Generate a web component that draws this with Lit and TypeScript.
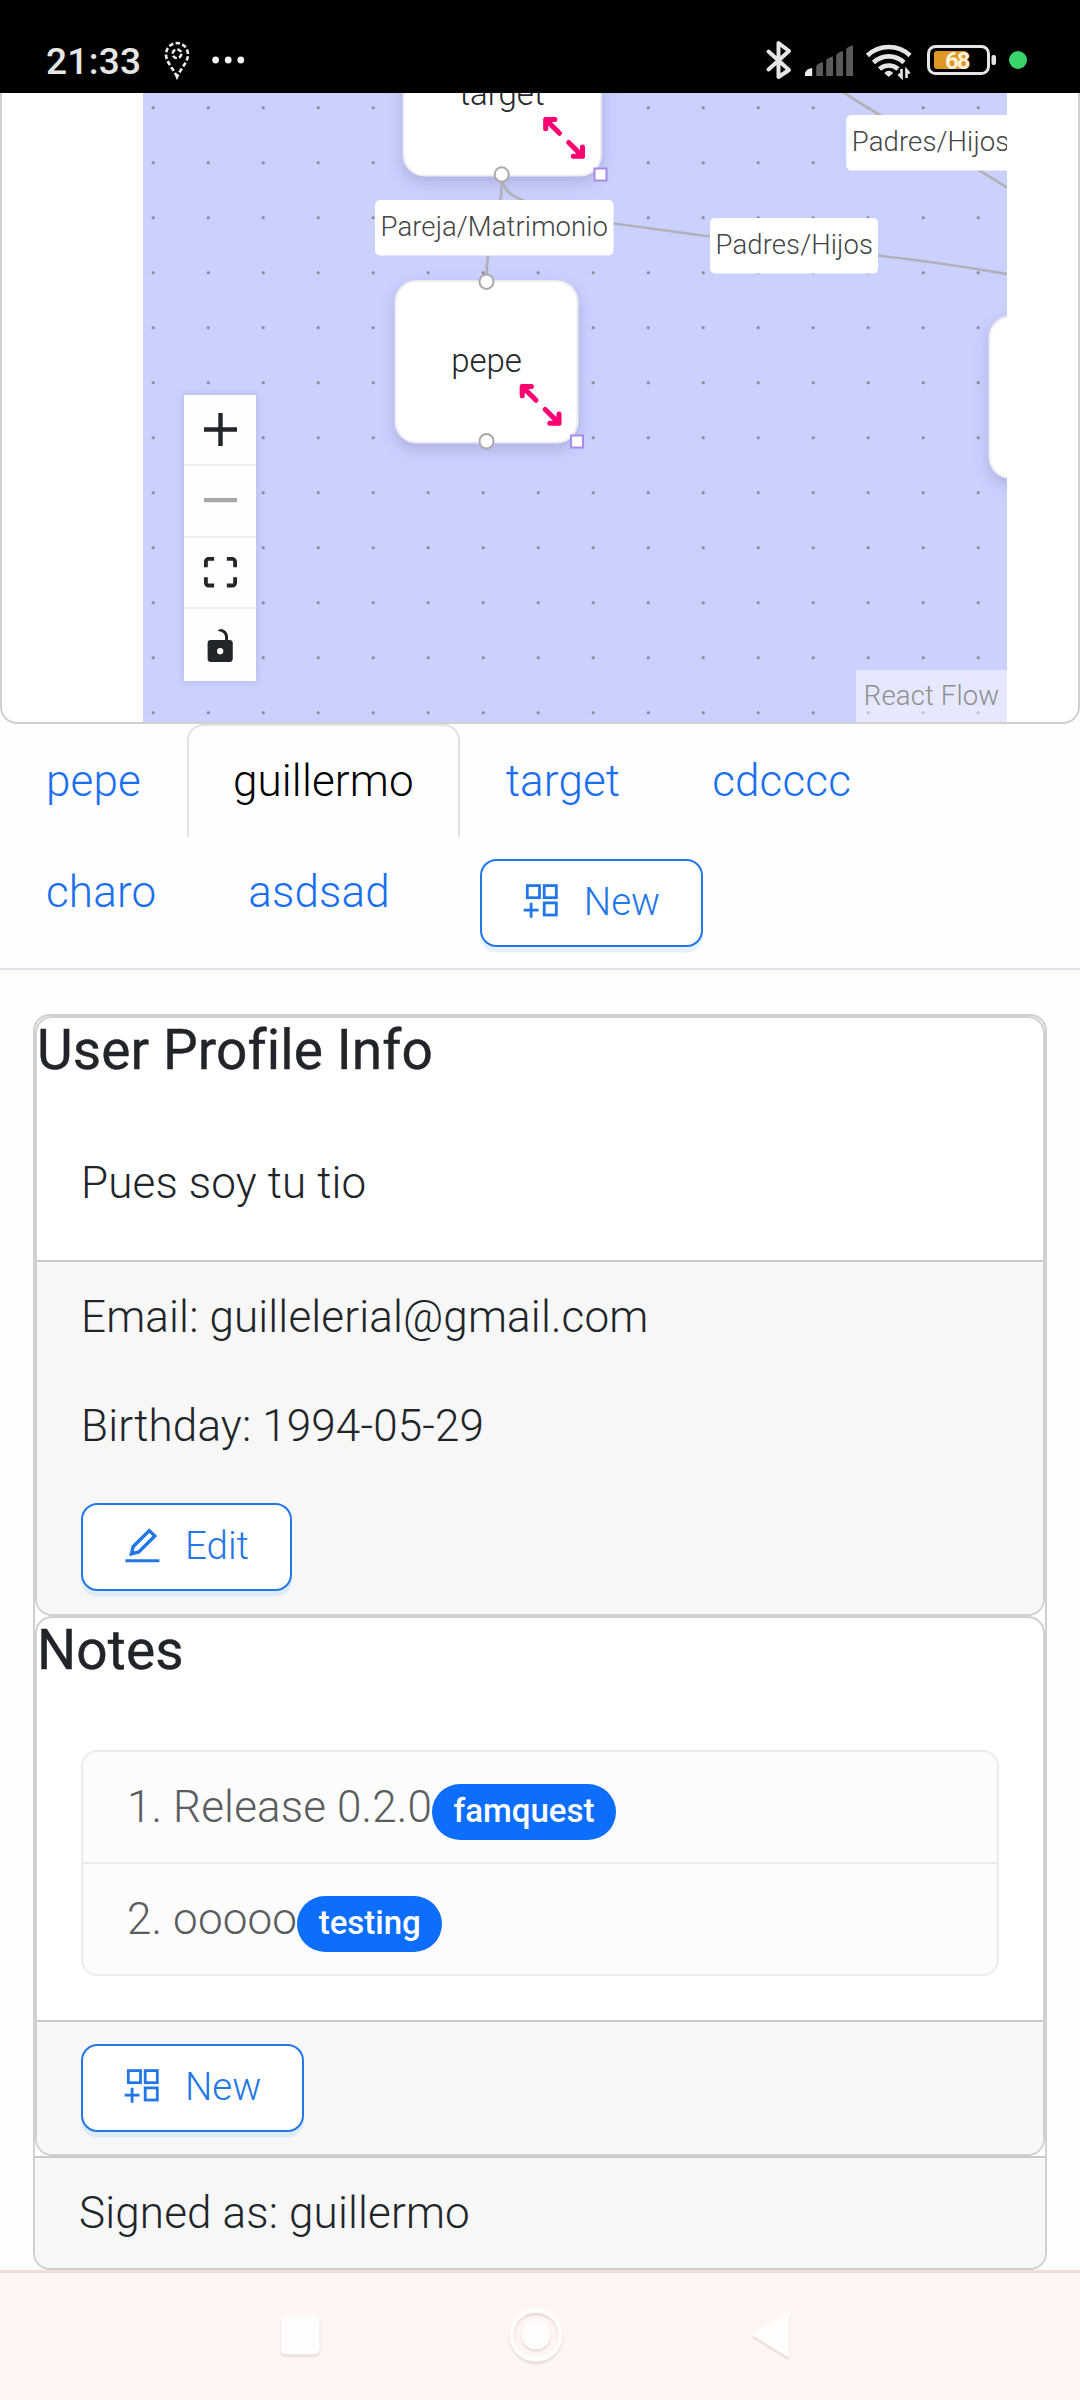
import { LitElement, html, css, svg, nothing } from "lit";
import { customElement, property } from "lit/decorators.js";

const appIcon = html`<svg class="ico" viewBox="0 0 36 36" fill="none" stroke="currentColor" stroke-width="2.8">
  <rect x="4.3" y="2.6" width="12.200" height="12.100"></rect>
  <rect x="21.2" y="2.6" width="12.100" height="12.100"></rect>
  <rect x="21.2" y="19.9" width="12.100" height="12.100"></rect>
  <path d="M0.6 27.2H15.6M8.1 19.7V34.7"></path>
</svg>`;

const editIcon = html`<svg class="ico" viewBox="0 0 36 36" fill="none" stroke="currentColor">
  <path d="M1.4 33.7H35.4" stroke-width="3"></path>
  <path d="M25.3 3.6L30.800 8.900L14.800 24.900L7.500 26.800L9.100 19.700Z" stroke-width="3.4"></path>
</svg>`;

@customElement("ui-button")
class UiButton extends LitElement {
  @property() label = "";
  @property() icon = "new";
  static styles = css`
    :host { display: inline-block; }
    .btn {
      display: flex; align-items: center; gap: 25px; height: 88px; box-sizing: border-box;
      padding: 0 41px; border: 2px solid #2277e8; border-radius: 16.5px; background: #fff;
      color: #2277e8; font: 300 38.5px/60px Roboto, sans-serif; letter-spacing: 0; box-shadow: 0 5.5px 0 rgba(5, 145, 255, 0.1);
    }
    .ico { width: 36px; height: 36px; display: block; margin-top: -4px; }
    .label { margin-top: -2px; }
  `;
  render() {
    return html`<div class="btn">${this.icon === "edit" ? editIcon : appIcon}<span class="label">${this.label}</span></div>`;
  }
}

@customElement("status-bar")
class StatusBar extends LitElement {
  static styles = css`
    :host { display: block; }
    .bar { height: 93px; background: #000; display: flex; box-sizing: border-box; padding: 0 52px 0 46px; color: #e6e6e6; align-items: flex-start; }
    .time { font: 500 37px/44px Roboto, sans-serif; letter-spacing: 0.3px; margin-top: 40px; width: 116px; white-space: nowrap; }
    .left, .right { display: block; }
    .right { margin-left: auto; }
    .pct { font: 700 24px Roboto, sans-serif; letter-spacing: 0; }
  `;
  render() {
    return html`<div class="bar">
      <span class="time">21:33</span>
      <svg class="left" width="90" height="93" viewBox="162 0 90 93" fill="none" stroke="#f0f0f0">
        <path d="M177 77C173 68 166 62 166 54.500A11 11.500 0 0 1 188 54.500C188 62 181 68 177 77Z" stroke-width="2.600" stroke-dasharray="4.500 2.400"></path>
        <circle cx="177" cy="53.800" r="4.300" stroke-width="2.400" stroke-dasharray="4.500 2.200"></circle>
        <g fill="#f0f0f0" stroke="none"><circle cx="215.600" cy="60" r="3.400"></circle><circle cx="228.200" cy="60" r="3.400"></circle><circle cx="240.800" cy="60" r="3.400"></circle></g>
      </svg>
      <svg class="right" width="268" height="93" viewBox="760 0 268 93" fill="none" stroke="#e6e6e6">
        <path d="M768.500 51.500L789 70L778.500 77V43L789 51L768.500 69.500" stroke-width="4" stroke-linejoin="round" stroke-linecap="round"></path>
        <g stroke="none" fill="#5a5a5a">
          <path d="M805 76V73Q806 69 812.200 68V76Z" fill="#eee"></path>
          <path d="M816.200 76V66Q818 63 823 62V76Z"></path>
          <path d="M826.200 76V60Q828 57.500 833 56.500V76Z"></path>
          <path d="M836.200 76V55Q838 52 843 51V76Z"></path>
          <path d="M846.200 76V49Q848 46.500 853 45.500V76Z"></path>
        </g>
        <g stroke-width="4.600">
          <path d="M867.500 55.500A31 31 0 0 1 910 55.500"></path>
          <path d="M873.500 62.500A22 22 0 0 1 904 62.500"></path>
          <path d="M879.500 69A14 14 0 0 1 898 69"></path>
        </g>
        <path d="M884.300 73Q888.700 68.500 893.200 73L888.700 77Z" fill="#e6e6e6" stroke="none"></path>
        <path d="M901.500 69V77L898.500 74M906.500 78V70L909.500 73.500" stroke-width="2.600"></path>
        <rect x="928.500" y="46.500" width="60" height="27" rx="7" stroke-width="3"></rect>
        <rect x="991.500" y="55" width="4.500" height="10" rx="2" fill="#e6e6e6" stroke="none"></rect>
        <rect x="934" y="51" width="33" height="18" rx="3" fill="#dd9722" stroke="none"></rect>
        <text class="pct" x="945" y="69.300" textLength="25.500" fill="#fff1d8" stroke="none">68</text>
        <circle cx="1018" cy="60" r="9" fill="#39d46a" stroke="none"></circle>
      </svg>
    </div>`;
  }
}

interface FlowNode { x: number; y: number; w: number; h: number; label: string; tx: number; ty: number; bottom: boolean; }
interface EdgeLabel { x: number; y: number; w: number; text: string; tx: number; tw: number; }

/* Canvas origin is (143, 93) in the window; the view box keeps window units. */
const nodes: FlowNode[] = [
  { x: 402.5, y: 13, w: 199.500, h: 163.500, label: "target", tx: 502, ty: 104.500, bottom: true },
  { x: 394.500, y: 280, w: 184, h: 163.500, label: "pepe", tx: 486.500, ty: 372, bottom: true },
  { x: 988.500, y: 315.500, w: 184, h: 163.500, label: "", tx: 0, ty: 0, bottom: false },
];
const labels: EdgeLabel[] = [
  { x: 375, y: 200, w: 238.500, text: "Pareja/Matrimonio", tx: 380.500, tw: 227.500 },
  { x: 710, y: 218, w: 168, text: "Padres/Hijos", tx: 715.500, tw: 157.500 },
  { x: 846.300, y: 115, w: 168, text: "Padres/Hijos", tx: 851.800, tw: 157.500 },
];

@customElement("flow-canvas")
class FlowCanvas extends LitElement {
  static styles = css`
    :host { display: block; width: 864px; height: 629px; position: relative; overflow: hidden; background: #cbd1ff; }
    .canvas { display: block; letter-spacing: 0; }
    .node { fill: #fff; stroke: #ececf0; stroke-width: 2; filter: drop-shadow(0 6px 8px rgba(30, 30, 80, 0.18)); }
    .name { font: 300 33px Roboto, sans-serif; fill: #222529; text-anchor: middle; }
    .edge { fill: none; stroke: #b1b1b7; stroke-width: 2.75; }
    .tag { font: 300 27.5px Roboto, sans-serif; fill: #444; }
    .handle { fill: #fff; stroke: #aaa; stroke-width: 2; }
    .grip { fill: #fff; stroke: #a78be6; stroke-width: 2; }
    .arrows { fill: none; stroke: #ff0072; stroke-width: 2.2; stroke-linecap: round; stroke-linejoin: round; }
    .controls { position: absolute; left: 41px; top: 302px; width: 72px; box-shadow: 0 0 6px 2px rgba(0, 0, 0, 0.08); background: #fefefe; }
    .control { height: 71px; box-sizing: border-box; border-bottom: 2px solid #eee; display: flex; align-items: center; justify-content: center; fill: #222529; }
    .control:nth-child(even) { height: 72px; }
    .control:last-child { border-bottom: 0; }
    .glyph { width: 33px; height: 33px; }
    .dim { fill: #a7a7a7; margin-top: -2px; }
    .credit { position: absolute; right: 0; bottom: 0; width: 151px; height: 52px; box-sizing: border-box; background: rgba(255, 255, 255, 0.5); color: #8f8f8f; font: 300 27.5px/52px Roboto, sans-serif; text-align: center; white-space: nowrap; }
  `;
  render() {
    return html`
      <svg class="canvas" width="864" height="629" viewBox="143 93 864 629">
        <defs><pattern id="dots" x="125.700" y="80.200" width="55" height="55" patternUnits="userSpaceOnUse"><circle cx="27.500" cy="27.500" r="1.500" fill="#81818a"></circle></pattern></defs>
        <rect x="143" y="93" width="864" height="629" fill="url(#dots)"></rect>
        <path class="edge" d="M840 90C900 131 950 150 1010 189.500"></path>
        ${nodes.map((n) => svg`<rect class="node" x=${n.x + 1} y=${n.y + 1} width=${n.w - 2} height=${n.h - 2} rx="21"></rect>
          ${n.bottom ? svg`<text class="name" x=${n.tx} y=${n.ty}>${n.label}</text>
          <g class="arrows" transform="translate(${n.x + n.w - 65.500} ${n.y + n.h - 66.200}) scale(2.3)"><path d="M16 20H20V16M14 14L20 20M8 4H4V8M4 4L10 10"></path></g>
          <rect class="grip" x=${n.x + n.w - 7.500} y=${n.y + n.h - 8} width="12" height="12"></rect>` : nothing}`)}
        <path class="edge" d="M501.700 178C501.700 228 486.500 228 486.500 280"></path>
        <path class="edge" d="M501.700 180C505 191 512 196 522 200C560 214 590 220 614 223.500L710 236.500L878 255.500Q940 262.500 1010 274.500"></path>
        ${labels.map((l) => svg`<rect x=${l.x} y=${l.y} width=${l.w} height="55.500" rx="5" fill="#fff"></rect>
          <text class="tag" x=${l.tx} y=${l.y + 36} textLength=${l.tw}>${l.text}</text>`)}
        <ellipse class="handle" cx="501.700" cy="174.500" rx="7" ry="7.300"></ellipse>
        <ellipse class="handle" cx="486.500" cy="281.700" rx="7" ry="7.300"></ellipse>
        <ellipse class="handle" cx="486.500" cy="441.200" rx="7" ry="7.300"></ellipse>
      </svg>
      <div class="controls">
        <div class="control"><svg class="glyph" viewBox="0 0 32 32"><path d="M32 18.133H18.133V32h-4.266V18.133H0v-4.266h13.867V0h4.266v13.867H32z"></path></svg></div>
        <div class="control"><svg class="glyph dim" viewBox="0 0 32 5"><path d="M0 0h32v4.200H0z"></path></svg></div>
        <div class="control"><svg class="glyph" viewBox="0 0 32 30"><path d="M3.692 4.630c0-.53.4-.938.939-.938h5.215V0H4.708C2.130 0 0 2.054 0 4.630v5.216h3.692V4.631zM27.354 0h-5.200v3.692h5.170c.53 0 .984.4.984.939v5.215H32V4.631A4.624 4.624 0 0027.354 0zm.954 24.830c0 .532-.4.94-.939.94h-5.215v3.768h5.215c2.577 0 4.631-2.130 4.631-4.707v-5.139h-3.692v5.139zm-23.677.94c-.531 0-.939-.4-.939-.94v-5.138H0v5.139c0 2.577 2.130 4.707 4.708 4.707h5.138V25.770H4.631z"></path></svg></div>
        <div class="control"><svg class="glyph" viewBox="0 0 25 32"><path d="M21.333 10.667H19.810V7.619C19.810 3.429 16.380 0 12.190 0c-4.114 1.828-1.370 2.133.305 2.438 1.676.305 4.420 2.590 4.420 5.181v3.048H3.047A3.056 3.056 0 000 13.714v15.238A3.056 3.056 0 003.048 32h18.285a3.056 3.056 0 003.048-3.048V13.714a3.056 3.056 0 00-3.048-3.047zM12.190 24.533a3.056 3.056 0 01-3.047-3.047 3.056 3.056 0 013.047-3.048 3.056 3.056 0 013.048 3.048 3.056 3.056 0 01-3.048 3.047z"></path></svg></div>
      </div>
      <div class="credit">React Flow</div>`;
  }
}

@customElement("app-root")
class AppRoot extends LitElement {
  static styles = css`
    :host { display: block; width: 1080px; height: 2400px; overflow: hidden; background: #fefefe; color: #212529; font: 300 44px/66px Roboto, sans-serif; letter-spacing: 0.15px; }
    .flow-card { height: 631px; box-sizing: border-box; border: 2px solid #d0d0d0; border-top: 0; border-radius: 0 0 17px 17px; background: #fff; padding: 0 71px 0 141px; }
    .tabs { display: flex; flex-wrap: wrap; align-items: flex-start; align-content: flex-start; height: 246px; box-sizing: border-box; border-bottom: 2px solid #dee2e6; }
    .tab { height: 113px; margin-bottom: -2px; box-sizing: border-box; border: 2px solid transparent; border-radius: 16.5px 16.5px 0 0; padding: 22px 44px 0; color: #1a6ff0; white-space: nowrap; }
    .tab.active { color: #000; border-color: #dee2e6; border-bottom: 0; background: #fefefe; }
    .add { padding: 24px 44px 0; }
    .brk { width: 100%; height: 0; }
    .outer { margin: 44px 33px 0; border: 2px solid #d0d0d0; border-radius: 17px; background: #fff; overflow: hidden; }
    .card { border: 2px solid #d0d0d0; border-radius: 17px; overflow: hidden; box-sizing: border-box; display: flex; flex-direction: column; }
    .info { height: 600px; }
    .notes { height: 540px; }
    .title { margin: 0; font: 400 55px/64px Roboto, sans-serif; letter-spacing: 0.1px; -webkit-text-stroke: 0.4px currentColor; }
    .body { padding: 0 44px; }
    .info .body { height: 178px; box-sizing: border-box; padding-top: 68px; }
    .notes .body { height: 338px; box-sizing: border-box; padding-top: 68px; }
    .foot { flex: 1; background: #f7f7f7; border-top: 2px solid #cacaca; padding: 22px 44px 0; }
    .line { margin: 0 0 44px; }
    .line.email { margin-bottom: 43px; }
    .list { margin: 0; padding: 0; list-style: none; border: 2px solid #e9ebed; border-radius: 16.5px; background: #fcfcfc; color: #5a5d60; }
    .item { height: 110px; box-sizing: border-box; padding: 22px 44px 0; display: flex; }
    .item + .item { border-top: 2px solid #e9ebed; height: 112px; }
    .badge { font: 500 33px/54px Roboto, sans-serif; letter-spacing: 0; height: 56px; margin-top: 10px; padding: 0 21.500px; border-radius: 28px; background: #0d6efd; color: #fff; }
    .signed { height: 112px; box-sizing: border-box; border-top: 2px solid #cacaca; background: #f7f7f7; padding: 22px 44px 0; }
    .nav { height: 130px; box-sizing: border-box; border-top: 3px solid #f2dcda; background: #fff6f4; }
    .keys { display: block; filter: drop-shadow(0 2px 1px rgba(90, 40, 30, 0.16)); }
  `;
  render() {
    return html`
      <status-bar></status-bar>
      <div class="flow-card"><flow-canvas></flow-canvas></div>
      <div class="tabs">
        <span class="tab">pepe</span><span class="tab active">guillermo</span><span class="tab">target</span><span class="tab">cdcccc</span>
        <span class="brk"></span>
        <span class="tab">charo</span><span class="tab">asdsad</span><div class="add"><ui-button label="New"></ui-button></div>
      </div>
      <div class="outer">
        <section class="card info">
          <h5 class="title">User Profile Info</h5>
          <div class="body">Pues soy tu tio</div>
          <div class="foot">
            <p class="line email">Email: guillelerial@gmail.com</p>
            <p class="line">Birthday: 1994-05-29</p>
            <ui-button label="Edit" icon="edit"></ui-button>
          </div>
        </section>
        <section class="card notes">
          <h5 class="title">Notes</h5>
          <div class="body">
            <ol class="list">
              <li class="item"><span>1. Release 0.2.0</span><span class="badge">famquest</span></li>
              <li class="item"><span>2. ooooo</span><span class="badge">testing</span></li>
            </ol>
          </div>
          <div class="foot"><ui-button label="New"></ui-button></div>
        </section>
        <div class="signed">Signed as: guillermo</div>
      </div>
      <div class="nav">
        <svg class="keys" width="1080" height="127" viewBox="0 2273 1080 127" fill="#fffdfb">
          <rect x="281" y="2316" width="38.500" height="38.500" rx="5"></rect>
          <circle cx="536" cy="2335" r="24.500" fill="none" stroke="#fffdfb" stroke-width="4.500"></circle>
          <circle cx="536" cy="2335" r="14.500"></circle>
          <path d="M754 2335L788 2314V2356Z" stroke="#fffdfb" stroke-width="2.500" stroke-linejoin="round"></path>
        </svg>
      </div>`;
  }
}
